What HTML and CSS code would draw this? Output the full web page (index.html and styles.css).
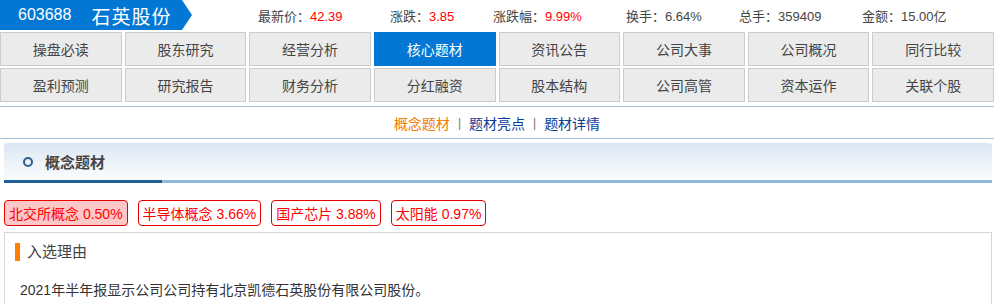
FILE: index.html
```html
<!DOCTYPE html>
<html lang="zh-CN">
<head>
    <meta charset="UTF-8">
    <title>石英股份 - 核心题材</title>
    <link rel="stylesheet" href="styles.css">
</head>
<body>

<!-- 顶部行情条 -->
<div class="topbar">
    <div class="brand">
        <span class="code">603688</span>
        <span class="name">石英股份</span>
    </div>
    <ul class="quote">
        <li class="q1">最新价：<em>42.39</em></li>
        <li class="q2">涨跌：<em>3.85</em></li>
        <li class="q3">涨跌幅：<em>9.99%</em></li>
        <li class="q4">换手：<span>6.64%</span></li>
        <li class="q5">总手：<span>359409</span></li>
        <li class="q6">金额：<span>15.00亿</span></li>
    </ul>
</div>

<!-- 栏目导航 -->
<div class="nav">
    <a>操盘必读</a>
    <a>股东研究</a>
    <a>经营分析</a>
    <a class="active">核心题材</a>
    <a>资讯公告</a>
    <a>公司大事</a>
    <a>公司概况</a>
    <a>同行比较</a>
    <a>盈利预测</a>
    <a>研究报告</a>
    <a>财务分析</a>
    <a>分红融资</a>
    <a>股本结构</a>
    <a>公司高管</a>
    <a>资本运作</a>
    <a>关联个股</a>
</div>

<div class="subnav">
    <a class="current">概念题材</a>
    <span class="sep">|</span>
    <a>题材亮点</a>
    <span class="sep">|</span>
    <a>题材详情</a>
</div>

<div class="section">
    <div class="section-head">
        <i class="dot"></i>
        <h2>概念题材</h2>
    </div>

    <div class="tags">
        <span class="tag on">北交所概念 0.50%</span>
        <span class="tag">半导体概念 3.66%</span>
        <span class="tag">国产芯片 3.88%</span>
        <span class="tag">太阳能 0.97%</span>
    </div>

    <div class="reason">
        <h3>入选理由</h3>
        <p>2021年半年报显示公司公司持有北京凯德石英股份有限公司股份。</p>
    </div>
</div>

</body>
</html>
```

FILE: styles.css
```css
body {
    margin: 0;
    padding: 0;
    font-family: "Liberation Sans", "Noto Sans CJK SC", sans-serif;
    background-color: #ffffff;
    color: #333;
    height: 304px;
    overflow: hidden;
}
/* 顶部行情条 */
.topbar {
    display: flex;
    align-items: center;
    height: 30px;
}
.brand {
    display: flex;
    align-items: center;
    width: 192px;
    height: 30px;
    background-color: #0277d3;
    color: #fff;
    clip-path: polygon(0 0, 182px 0, 192px 15px, 182px 30px, 0 30px);
}
.brand .code {
    font-size: 16px;
    margin-left: 18px;
}
.brand .name {
    font-size: 19px;
    margin-left: 20px;
    letter-spacing: 1px;
}
.quote {
    display: flex;
    list-style: none;
    margin: 0 0 0 66px;
    padding: 0;
    font-size: 13px;
    color: #444;
}
.quote em {
    font-style: normal;
    color: #f00;
}
.q1 { width: 132px; }
.q2 { width: 103px; }
.q3 { width: 133px; }
.q4 { width: 113px; }
.q5 { width: 123px; }
/* 栏目导航 */
.nav {
    display: grid;
    grid-template-columns: repeat(8, 1fr);
    gap: 2px 3px;
    margin-top: 2px;
}
.nav a {
    display: flex;
    align-items: center;
    justify-content: center;
    height: 32px;
    border: 1px solid #cccccc;
    background-color: #ebebeb;
    color: #444;
    font-size: 14px;
    cursor: pointer;
}
.nav a.active {
    background-color: #0277d3;
    border-color: #0277d3;
    color: #fff;
}
.subnav {
    display: flex;
    justify-content: center;
    align-items: center;
    gap: 8px;
    height: 31px;
    margin-top: 4px;
    border-top: 1px solid #a3bfd6;
    border-bottom: 1px solid #a3bfd6;
    font-size: 14px;
}
.subnav a {
    color: #0b3d97;
    cursor: pointer;
}
.subnav a.current {
    color: #f27b00;
}
.subnav .sep {
    color: #777;
    font-size: 12px;
}
/* 概念题材 */
.section {
    padding: 0 2px 0 4px;
}
.section-head {
    display: flex;
    align-items: center;
    height: 37px;
    margin-top: 4px;
    border-radius: 3px 3px 0 0;
    background: linear-gradient(#dbe6f2, #fbfdfe);
    border-bottom: 3px solid #8fb9dd;
    position: relative;
}
/* 标题下方深色短线 */
.section-head::after {
    content: '';
    position: absolute;
    left: 0;
    bottom: -3px;
    width: 158px;
    height: 3px;
    background-color: #1f6196;
}
.dot {
    width: 6px;
    height: 6px;
    margin-left: 19px;
    border: 2px solid #2a5f8c;
    border-radius: 50%;
}
.section-head h2 {
    margin: 0 0 0 12px;
    font-size: 15px;
    font-weight: bold;
    color: #444;
}
.tags {
    display: flex;
    gap: 10px;
    margin-top: 17px;
}
.tag {
    display: flex;
    align-items: center;
    height: 24px;
    padding: 0 4px;
    border: 1px solid #e60000;
    border-radius: 4px;
    color: #f00;
    font-size: 14px;
}
.tag.on {
    background-color: #ffc8c8;
}
.reason {
    margin-top: 6px;
    height: 90px;
    border: 1px solid #d6d6d6;
    padding: 10px 0 0 10px;
}
.reason h3 {
    margin: 0;
    height: 18px;
    line-height: 18px;
    padding-left: 7px;
    border-left: 5px solid #ff7f00;
    font-size: 15px;
    font-weight: normal;
    color: #444;
}
.reason p {
    margin: 18px 0 0 5px;
    font-size: 14px;
    color: #333;
}
```
